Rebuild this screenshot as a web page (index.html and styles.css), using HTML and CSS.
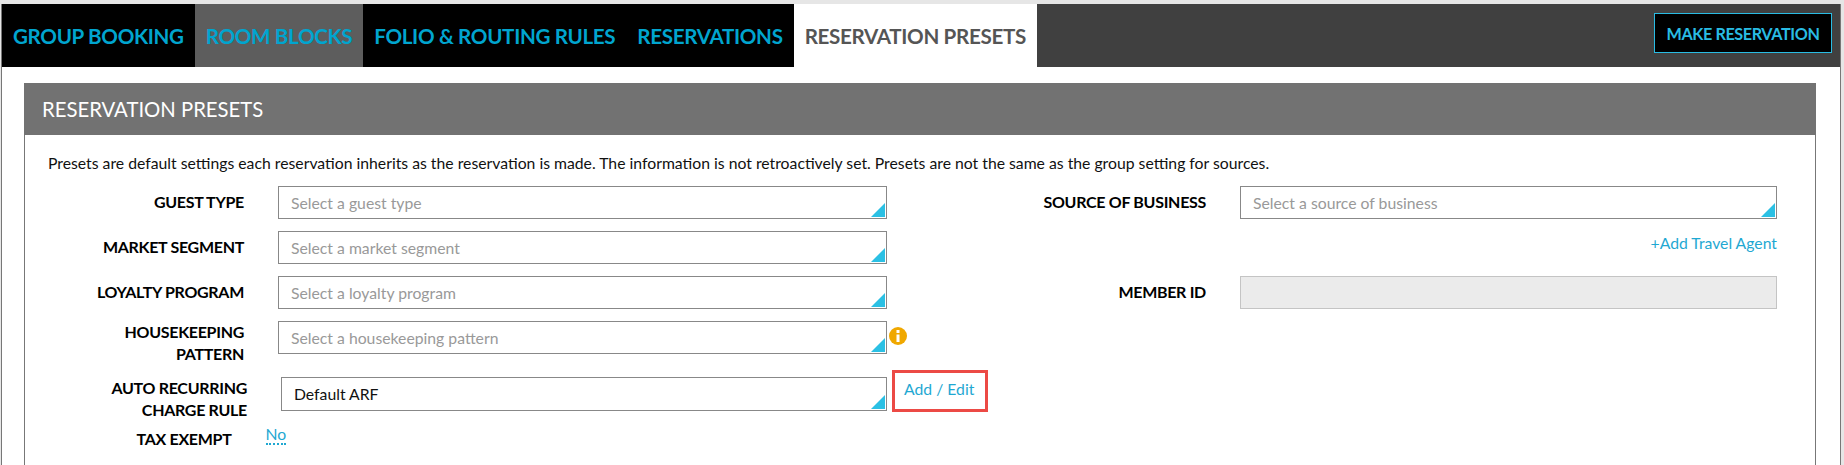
FILE: index.html
```html
<!DOCTYPE html>
<html lang="en">
<head>
  <meta charset="utf-8">
  <title>Reservation Presets</title>
  <link rel="stylesheet" href="styles.css">
</head>
<body>
  <div class="page">
    <div class="tab-bar">
      <a class="tab">GROUP BOOKING</a>
      <a class="tab tab-hover">ROOM BLOCKS</a>
      <a class="tab">FOLIO &amp; ROUTING RULES</a>
      <a class="tab">RESERVATIONS</a>
      <a class="tab tab-active">RESERVATION PRESETS</a>
      <button class="make-btn">MAKE RESERVATION</button>
    </div>
    <div class="content">
      <div class="panel">
        <div class="panel-title">RESERVATION PRESETS</div>
        <div class="panel-body">
          <p class="intro">Presets are default settings each reservation inherits as the reservation is made. The information is not retroactively set. Presets are not the same as the group setting for sources.</p>
          <div class="columns">
            <div class="col-left">
              <div class="field">
                <label class="field-label">GUEST TYPE</label>
                <div class="select placeholder">Select a guest type</div>
              </div>
              <div class="field">
                <label class="field-label">MARKET SEGMENT</label>
                <div class="select placeholder">Select a market segment</div>
              </div>
              <div class="field">
                <label class="field-label">LOYALTY PROGRAM</label>
                <div class="select placeholder">Select a loyalty program</div>
              </div>
              <div class="field">
                <label class="field-label two-line">HOUSEKEEPING<br>PATTERN</label>
                <div class="select placeholder">Select a housekeeping pattern</div>
                <svg class="info-icon" viewBox="0 0 18 18">
                  <circle cx="9" cy="9" r="9" fill="#f0a800"/>
                  <rect x="7.5" y="3" width="3" height="3" fill="#fff"/>
                  <rect x="7.5" y="7.5" width="3" height="7.5" fill="#fff"/>
                </svg>
              </div>
              <div class="field field-auto">
                <label class="field-label two-line">AUTO RECURRING<br>CHARGE RULE</label>
                <div class="select">Default ARF</div>
                <a class="add-edit">Add / Edit</a>
              </div>
              <div class="field-tax">
                <label class="field-label tax-label">TAX EXEMPT</label>
                <a class="tax-value">No</a>
              </div>
            </div>
            <div class="col-right">
              <div class="field field-source">
                <label class="field-label">SOURCE OF BUSINESS</label>
                <div class="select placeholder">Select a source of business</div>
              </div>
              <div class="travel-row"><a class="link">+Add Travel Agent</a></div>
              <div class="field">
                <label class="field-label">MEMBER ID</label>
                <div class="input-disabled"></div>
              </div>
            </div>
          </div>
        </div>
      </div>
    </div>
  </div>
</body>
</html>
```

FILE: styles.css
```css
* {
  box-sizing: border-box;
}
html, body {
  margin: 0;
  height: 465px;
  overflow: hidden;
}
body {
  background-color: #e6e6e6;
  font-family: "Lato", "Liberation Sans", sans-serif;
  color: #000;
  padding: 4px 3px 0 1px;
}
.page {
  height: 100%;
  background-color: #fff;
  border-left: 1px solid #777;
  border-right: 1px solid #777;
  display: flex;
  flex-direction: column;
}
.tab-bar {
  display: flex;
  height: 63px;
  background-color: #404040;
  padding-right: 8px;
}
.tab {
  display: flex;
  align-items: center;
  padding: 0 11px;
  background-color: #000;
  color: #00a5cf;
  font-size: 20.6px;
  font-weight: 700;
  letter-spacing: -0.33px;
}
.tab-hover {
  background-color: #5d5d5d;
}
.tab-active {
  background-color: #fff;
  color: #555;
}
.make-btn {
  margin: 9px 0 14px auto;
  width: 178px;
  background-color: #000;
  border: 1px solid #29bce3;
  color: #29bce3;
  font-family: inherit;
  font-size: 16.2px;
  font-weight: 700;
  letter-spacing: -0.4px;
  padding: 0;
}
.content {
  flex: 1;
  padding: 16px 24px 0 22px;
}
.panel {
  height: 100%;
  border-left: 1px solid #777;
  border-right: 1px solid #777;
}
.panel-title {
  height: 52px;
  margin: 0 -1px;
  padding-left: 18px;
  display: flex;
  align-items: center;
  background-color: #727272;
  color: #fff;
  font-size: 20.3px;
}
.panel-body {
  padding: 0 38px 0 0;
}
.intro {
  margin: 0;
  height: 51px;
  padding: 18px 0 0 23px;
  font-size: 15.75px;
  line-height: 20px;
  color: #111;
}
.columns {
  display: flex;
}
.col-left {
  width: 905px;
  flex-shrink: 0;
}
.col-right {
  flex: 1;
}
.field {
  display: flex;
  height: 33px;
  margin-bottom: 12px;
}
.field-label {
  flex-shrink: 0;
  width: 219px;
  margin-right: 34px;
  text-align: right;
  font-size: 16px;
  font-weight: 700;
  letter-spacing: -0.3px;
  line-height: 22px;
  padding-top: 5px;
}
.two-line {
  padding-top: 0;
}
.select {
  position: relative;
  flex: 0 0 609px;
  height: 33px;
  padding-left: 12px;
  border: 1px solid #888;
  font-size: 15.75px;
  line-height: 31px;
  color: #111;
}
.select::after {
  content: "";
  position: absolute;
  right: 1px;
  bottom: 1px;
  border-style: solid;
  border-width: 0 0 14px 14px;
  border-color: transparent transparent #2bc0e4 transparent;
}
.placeholder {
  color: #999;
}
.info-icon {
  flex-shrink: 0;
  width: 18px;
  height: 18px;
  margin: 6px 0 0 2px;
}
.field-auto {
  height: 34px;
  margin-top: 23px;
}
.field-auto .field-label {
  width: 222px;
  padding-top: 0;
}
.field-auto .select {
  flex-basis: 606px;
  height: 34px;
  line-height: 32px;
}
.add-edit {
  position: relative;
  top: -7px;
  flex-shrink: 0;
  height: 42px;
  width: 96px;
  margin-left: 5px;
  border: 3px solid #ec4a45;
  color: #1fa8d2;
  font-size: 15.75px;
  line-height: 32px;
  padding-left: 9px;
  white-space: nowrap;
}
.field-tax {
  display: flex;
}
.tax-label {
  width: 206.5px;
  margin-right: 34px;
  padding-top: 5px;
}
.tax-value {
  height: 21px;
  margin-top: 1px;
  color: #1fa8d2;
  font-size: 15.75px;
  line-height: 19px;
  border-bottom: 2px dotted #1fa8d2;
}
.col-right .field-label {
  width: 276px;
}
.travel-row {
  height: 33px;
  margin-bottom: 12px;
  text-align: right;
  line-height: 24px;
}
.link {
  color: #1fa8d2;
  font-size: 15.75px;
}
.col-right .select,
.input-disabled {
  flex: 1;
}
.input-disabled {
  height: 33px;
  background-color: #ebebeb;
  border: 1px solid #c4c4c4;
}
```
